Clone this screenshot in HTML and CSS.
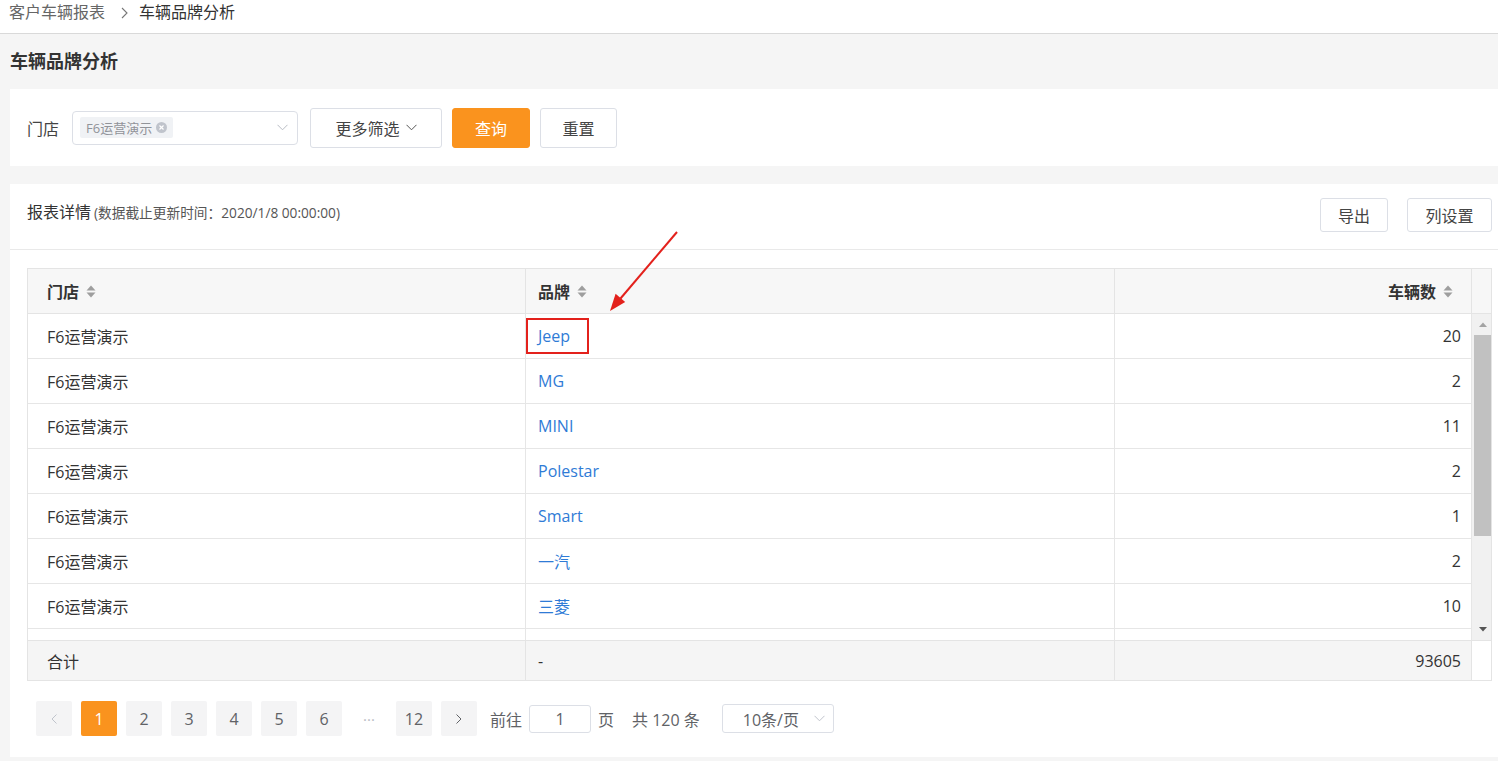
FILE: index.html
```html
<!DOCTYPE html>
<html lang="zh-CN">
<head>
<meta charset="utf-8">
<title>车辆品牌分析</title>
<link rel="stylesheet" href="styles.css">
</head>
<body>
<div class="crumb">
  <span class="crumb-link">客户车辆报表</span>
  <svg class="crumb-sep" viewBox="0 0 7 12" width="7" height="12"><polyline points="1,1 6,6 1,11" fill="none" stroke="#777" stroke-width="1.1"/></svg>
  <span class="crumb-cur">车辆品牌分析</span>
</div>
<main class="page">
  <h1 class="page-title">车辆品牌分析</h1>
  <section class="filter">
    <span class="filter-label">门店</span>
    <div class="store-select">
      <span class="tag">F6运营演示<svg class="tag-close" viewBox="0 0 12 12" width="11" height="11"><circle cx="6" cy="6" r="6" fill="#c0c4cc"/><path d="M3.8 3.8 L8.2 8.2 M8.2 3.8 L3.8 8.2" stroke="#fff" stroke-width="1.3"/></svg></span>
      <svg class="chev" viewBox="0 0 11 7" width="11" height="7"><polyline points="0.5,0.8 5.5,5.8 10.5,0.8" fill="none" stroke="#b8bcc4" stroke-width="1"/></svg>
    </div>
    <button class="btn btn-more">更多筛选<svg class="chev chev-dark" viewBox="0 0 11 7" width="11" height="7"><polyline points="0.5,0.8 5.5,5.8 10.5,0.8" fill="none" stroke="#555" stroke-width="1"/></svg></button>
    <button class="btn btn-primary">查询</button>
    <button class="btn btn-reset">重置</button>
  </section>

  <section class="report">
    <header class="report-head">
      <div class="report-title">报表详情<small>(数据截止更新时间：2020/1/8 00:00:00)</small></div>
      <div class="report-actions">
        <button class="btn btn-sm btn-export">导出</button>
        <button class="btn btn-sm btn-cols">列设置</button>
      </div>
    </header>

    <div class="report-body">
      <div class="table">
        <div class="thead">
          <div class="th c1">门店<svg class="sort" viewBox="0 0 10 13" width="10" height="13"><polygon points="0.5,5.5 5,0.5 9.5,5.5" fill="#9e9e9e"/><polygon points="0.5,7.5 9.5,7.5 5,12.5" fill="#9e9e9e"/></svg></div>
          <div class="th c2">品牌<svg class="sort" viewBox="0 0 10 13" width="10" height="13"><polygon points="0.5,5.5 5,0.5 9.5,5.5" fill="#9e9e9e"/><polygon points="0.5,7.5 9.5,7.5 5,12.5" fill="#9e9e9e"/></svg></div>
          <div class="th c3">车辆数<svg class="sort" viewBox="0 0 10 13" width="10" height="13"><polygon points="0.5,5.5 5,0.5 9.5,5.5" fill="#9e9e9e"/><polygon points="0.5,7.5 9.5,7.5 5,12.5" fill="#9e9e9e"/></svg></div>
          <div class="th gutter"></div>
        </div>

        <div class="tbody">
          <div class="rows">
            <div class="tr"><div class="td c1">F6运营演示</div><div class="td c2"><a class="link mark">Jeep</a></div><div class="td c3">20</div></div>
            <div class="tr"><div class="td c1">F6运营演示</div><div class="td c2"><a class="link">MG</a></div><div class="td c3">2</div></div>
            <div class="tr"><div class="td c1">F6运营演示</div><div class="td c2"><a class="link">MINI</a></div><div class="td c3">11</div></div>
            <div class="tr"><div class="td c1">F6运营演示</div><div class="td c2"><a class="link">Polestar</a></div><div class="td c3">2</div></div>
            <div class="tr"><div class="td c1">F6运营演示</div><div class="td c2"><a class="link">Smart</a></div><div class="td c3">1</div></div>
            <div class="tr"><div class="td c1">F6运营演示</div><div class="td c2"><a class="link">一汽</a></div><div class="td c3">2</div></div>
            <div class="tr"><div class="td c1">F6运营演示</div><div class="td c2"><a class="link">三菱</a></div><div class="td c3">10</div></div>
            <div class="tr"><div class="td c1"></div><div class="td c2"></div><div class="td c3"></div></div>
          </div>
          <div class="vscroll">
            <div class="vs-btn"><svg viewBox="0 0 8 5" width="8" height="5"><polygon points="0,5 4,0.5 8,5" fill="#a3a3a3"/></svg></div>
            <div class="vs-thumb"></div>
            <div class="vs-space"></div>
            <div class="vs-btn"><svg viewBox="0 0 8 5" width="8" height="5"><polygon points="0,0 8,0 4,4.5" fill="#555"/></svg></div>
          </div>
        </div>

        <div class="tfoot">
          <div class="tf c1">合计</div>
          <div class="tf c2">-</div>
          <div class="tf c3">93605</div>
          <div class="tf gutter"></div>
        </div>
      </div>

      <nav class="pager">
        <button class="pg pg-prev"><svg viewBox="0 0 6 10" width="6" height="10"><polyline points="5.5,0.5 1,5 5.5,9.5" fill="none" stroke="#c0c4cc" stroke-width="1"/></svg></button>
        <button class="pg active">1</button>
        <button class="pg">2</button>
        <button class="pg">3</button>
        <button class="pg">4</button>
        <button class="pg">5</button>
        <button class="pg">6</button>
        <span class="pg pg-more">···</span>
        <button class="pg">12</button>
        <button class="pg pg-next"><svg viewBox="0 0 6 10" width="6" height="10"><polyline points="0.5,0.5 5,5 0.5,9.5" fill="none" stroke="#606266" stroke-width="1"/></svg></button>
        <span class="pg-text pg-goto">前往</span>
        <span class="pg-input">1</span>
        <span class="pg-text pg-page">页</span>
        <span class="pg-text pg-total">共 120 条</span>
        <span class="pg-size">10条/页<svg class="chev" viewBox="0 0 11 7" width="11" height="7"><polyline points="0.5,0.8 5.5,5.8 10.5,0.8" fill="none" stroke="#c0c4cc" stroke-width="1"/></svg></span>
      </nav>
    </div>
  </section>
</main>

<svg class="annot-arrow" viewBox="0 0 90 95" width="90" height="95">
  <line x1="77" y1="7" x2="20.5" y2="73.5" stroke="#e3211c" stroke-width="2"/>
  <polygon points="10,86 15.6,68.8 25.2,77" fill="#e3211c"/>
</svg>
</body>
</html>
```

FILE: styles.css
```css
* { box-sizing: border-box; }

html, body { margin: 0; padding: 0; }

body {
  position: relative;
  background: #f5f5f5;
  color: #333;
  font-family: "Open Sans", "Noto Sans CJK SC", sans-serif;
  font-size: 16px;
  overflow: hidden;
}

/* breadcrumb */
.crumb {
  height: 34px;
  background: #fff;
  border-bottom: 1px solid #d9d9d9;
  display: flex;
  align-items: flex-start;
  padding: 1px 0 0 9px;
  line-height: 22px;
  font-size: 16px;
}
.crumb-link { color: #666; }
.crumb-sep { margin: 6px 11px 0 16px; }
.crumb-cur { color: #333; }

/* page */
.page { padding-left: 10px; }

.page-title {
  margin: 0;
  height: 55px;
  line-height: 55px;
  font-size: 18px;
  font-weight: bold;
  color: #333;
}

/* filter */
.filter {
  height: 77px;
  background: #fff;
  display: flex;
  align-items: center;
  padding: 0 17px;
}
.filter-label { margin-right: 13px; color: #444; }

.store-select {
  width: 226px;
  height: 34px;
  border: 1px solid #dcdfe6;
  border-radius: 4px;
  display: flex;
  align-items: center;
  justify-content: space-between;
  padding: 0 9px 0 7px;
}
.tag {
  height: 21px;
  background: #f0f2f5;
  border-radius: 2px;
  display: inline-flex;
  align-items: center;
  gap: 4px;
  padding: 0 6px 0 6px;
  font-size: 13px;
  color: #909399;
}
.tag-close { display: block; }
.chev { display: block; }

.btn {
  height: 40px;
  background: #fff;
  border: 1px solid #dcdfe6;
  border-radius: 3px;
  font-family: inherit;
  font-size: 16px;
  color: #444;
  padding: 0;
  display: inline-flex;
  align-items: center;
  justify-content: center;
}
.btn-more { width: 132px; margin-left: 12px; gap: 6px; }
.btn-primary {
  width: 78px;
  margin-left: 10px;
  background: #fa931e;
  border-color: #fa931e;
  color: #fff;
}
.btn-reset { width: 77px; margin-left: 10px; }

/* report */
.report {
  margin-top: 18px;
  background: #fff;
  padding-bottom: 21px;
}
.report-head {
  height: 66px;
  border-bottom: 1px solid #e9e9e9;
  display: flex;
  justify-content: space-between;
  align-items: flex-start;
  padding: 14px 6px 0 17px;
}
.report-title {
  margin-top: 3px;
  line-height: 22px;
  font-size: 16px;
  color: #333;
}
.report-title small {
  font-size: 13.7px;
  color: #555;
  margin-left: 3px;
}
.report-actions { display: flex; }
.btn-sm { height: 34px; }
.btn-export { width: 68px; }
.btn-cols { width: 85px; margin-left: 19px; }

.report-body { padding: 18px 6px 0 17px; }

/* table */
.table { border: 1px solid #e4e4e4; }

.thead {
  display: grid;
  grid-template-columns: 498px 589px 357px 19px;
  height: 45px;
  background: #f7f7f7;
  border-bottom: 1px solid #e4e4e4;
}
.th {
  display: flex;
  align-items: center;
  border-right: 1px solid #e4e4e4;
  font-weight: bold;
  color: #333;
}
.th .sort { margin-left: 7px; display: block; }
.th.c1 { padding-left: 19px; }
.th.c2 { padding-left: 12px; }
.th.c3 { justify-content: flex-end; padding-right: 18px; }
.th.gutter { border-right: none; }

.tbody {
  display: flex;
  height: 326px;
}
.rows {
  width: 1444px;
  overflow: hidden;
}
.tr {
  display: grid;
  grid-template-columns: 498px 589px 357px;
  height: 45px;
}
.td {
  display: flex;
  align-items: center;
  border-right: 1px solid #e6e6e6;
  border-bottom: 1px solid #e6e6e6;
  color: #333;
}
.td.c1 { padding-left: 19px; }
.td.c2 { padding-left: 12px; }
.td.c3 { justify-content: flex-end; padding-right: 10px; }

.link { color: #2f7bd6; text-decoration: none; }
.link.mark {
  border: 2px solid #e3211c;
  padding: 5px 17px 5px 10px;
  margin-left: -12px;
  line-height: 22px;
}

.vscroll {
  width: 19px;
  background: #f1f1f1;
  display: flex;
  flex-direction: column;
}
.vs-btn {
  height: 21px;
  display: flex;
  align-items: center;
  justify-content: center;
  padding-left: 2px;
}
.vs-thumb {
  height: 201px;
  margin-left: 2px;
  background: #c1c1c1;
}
.vs-space { flex: 1; }

.tfoot {
  display: grid;
  grid-template-columns: 498px 589px 357px 19px;
  height: 40px;
  border-top: 1px solid #e4e4e4;
}
.tf {
  display: flex;
  align-items: center;
  background: #f5f5f5;
  border-right: 1px solid #e4e4e4;
  color: #333;
}
.tf.c1 { padding-left: 19px; }
.tf.c2 { padding-left: 12px; }
.tf.c3 { justify-content: flex-end; padding-right: 10px; }
.tf.gutter { background: #fff; border-right: none; }

/* pager */
.pager {
  margin-top: 20px;
  padding-left: 9px;
  height: 35px;
  display: flex;
  align-items: center;
}
.pg {
  width: 36px;
  height: 35px;
  margin-right: 9px;
  border: none;
  border-radius: 2px;
  background: #f4f4f5;
  color: #606266;
  font-family: inherit;
  font-size: 16px;
  padding: 0;
  display: inline-flex;
  align-items: center;
  justify-content: center;
}
.pg.active { background: #fa931e; color: #fff; }
.pg-more { background: transparent; color: #b8bcc4; font-size: 15px; }
.pg-next { margin-right: 13px; }
.pg-text { color: #606266; font-size: 16px; }
.pg-input {
  width: 62px;
  height: 28px;
  margin: 0 7px;
  border: 1px solid #dcdfe6;
  border-radius: 3px;
  display: inline-flex;
  align-items: center;
  justify-content: center;
  color: #606266;
}
.pg-page { margin-right: 18px; }
.pg-size {
  width: 112px;
  height: 29px;
  margin-left: 22px;
  border: 1px solid #dcdfe6;
  border-radius: 3px;
  display: inline-flex;
  align-items: center;
  justify-content: space-between;
  padding: 0 8px 0 20px;
  color: #606266;
}

/* annotation arrow */
.annot-arrow {
  position: absolute;
  left: 600px;
  top: 225px;
}
```
